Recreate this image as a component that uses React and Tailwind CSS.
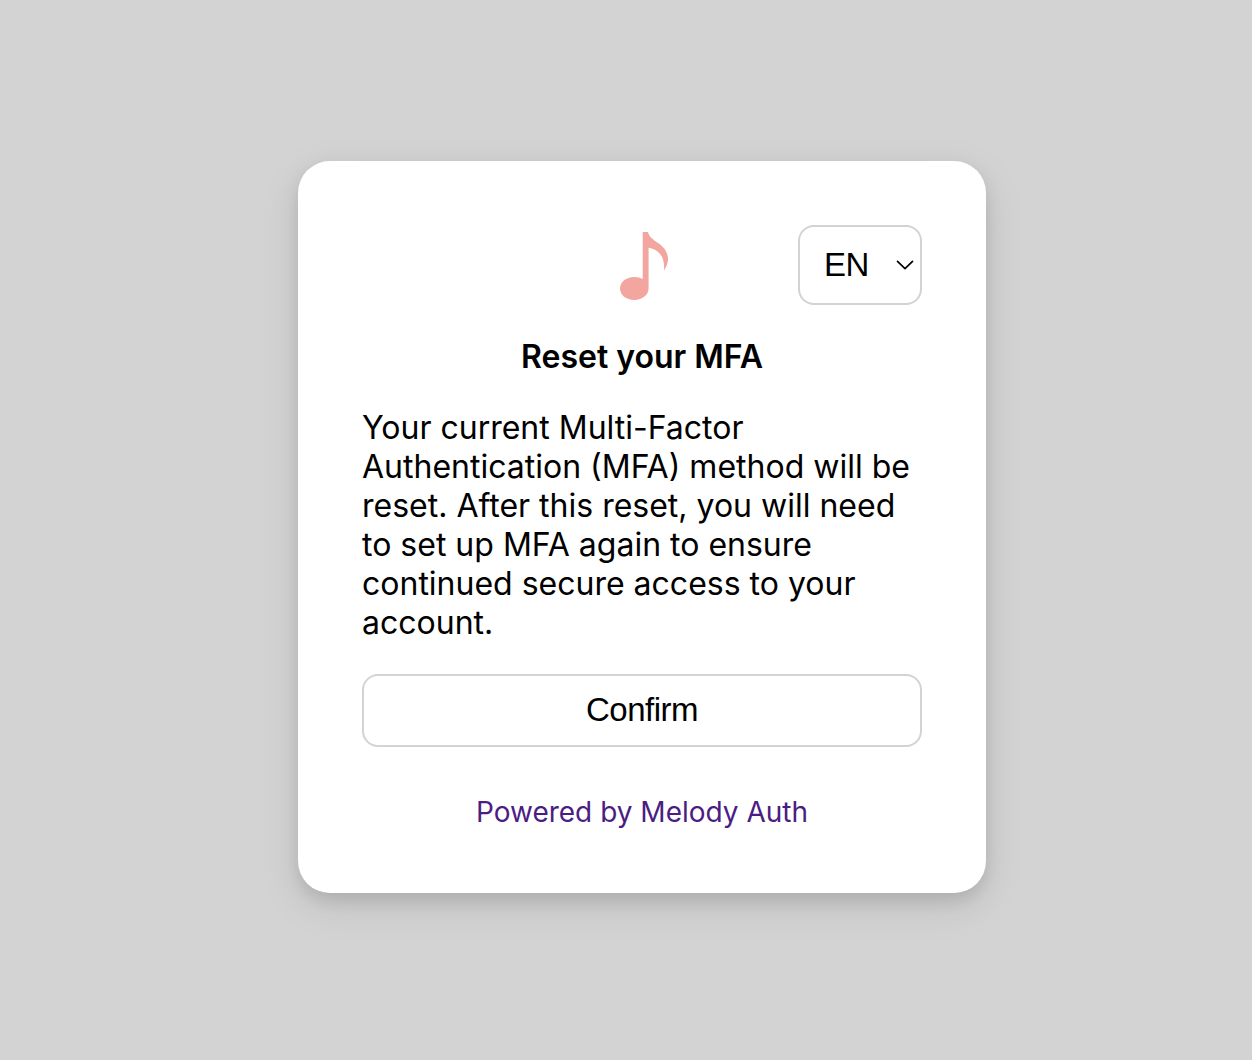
export default function App() {
  return (
    <main className="flex h-[1060px] w-full flex-col items-center bg-[#d3d3d3] pt-[161px] pl-8 font-['Inter',sans-serif] text-black">
      <section className="flex h-[732px] w-[688px] flex-col rounded-[32px] bg-white p-16 shadow-[0_8px_16px_rgba(0,0,0,0.1),0_12px_40px_rgba(0,0,0,0.1)]">
        <header className="grid h-20 grid-cols-[1fr_80px_1fr] items-center">
          <svg className="col-start-2 size-20" viewBox="0 0 80 80" fill="#f2a69f" aria-hidden="true">
            <path d="M40.700 7H46C47 12 51 14.500 56.500 18.300C62.500 22.500 66 28 66 34C66 38.500 64.200 42.500 62 45.500C63 34 59 25 46.600 22.700V63.300C46.600 70 40.300 75 32.200 75C24.200 75 18 70 18 63.500C18 57 24.200 52 32.200 52C35.500 52 38.400 52.700 40.700 54Z" />
          </svg>
          <button className="flex h-20 w-[124px] items-center justify-between justify-self-end rounded-2xl border-2 border-[#d3d3d3] pr-1.5 pl-6 font-['Liberation_Sans',Arial,sans-serif] text-[33px] tracking-[-0.5px]">
            <span>EN</span>
            <svg className="h-3 w-[18px]" viewBox="0 0 18 12" fill="none" stroke="black" strokeWidth="1.7" strokeLinecap="round" strokeLinejoin="round" aria-hidden="true"><path d="M1.500 2.300L9 9.700L16.500 2.300" /></svg>
          </button>
        </header>
        <h1 className="mt-8 text-center text-[32px] leading-[39px] font-semibold">Reset your MFA</h1>
        <p className="mt-8 text-[32px] leading-[39px]">Your current Multi-Factor Authentication (MFA) method will be reset. After this reset, you will need to set up MFA again to ensure continued secure access to your account.</p>
        <button className="mt-8 h-[73px] shrink-0 rounded-2xl border-2 border-[#d3d3d3] pb-0.5 font-['Liberation_Sans',Arial,sans-serif] text-[33px] leading-[39px] tracking-[-0.5px]">Confirm</button>
        <a className="mt-12 text-center text-[28px] leading-[34px] text-[#4b1d82]">Powered by Melody Auth</a>
      </section>
    </main>
  );
}
